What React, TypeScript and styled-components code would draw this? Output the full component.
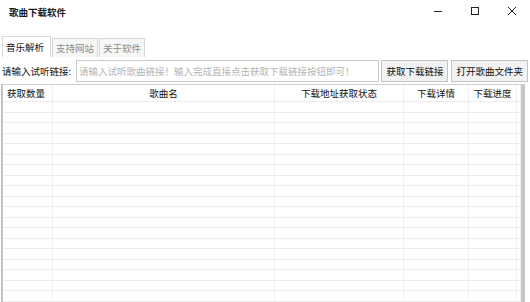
import * as React from 'react';
import styled, { createGlobalStyle } from 'styled-components';

const GlobalStyle = createGlobalStyle`
  html, body {
    margin: 0;
    padding: 0;
    background: #ffffff;
  }
  body {
    font-family: "Noto Sans CJK SC", "Noto Sans", sans-serif;
    color: #1a1a1a;
  }
`;

const columns = [
  { title: '获取数量', width: 50 },
  { title: '歌曲名', width: 222 },
  { title: '下载地址获取状态', width: 129 },
  { title: '下载详情', width: 65 },
  { title: '下载进度', width: 48 },
];

const tabs = ['音乐解析', '支持网站', '关于软件'];
const rowCount = 19;

const App: React.FC = () => (
  <>
    <GlobalStyle />
    <Window>
      <TitleBar>
        <Title>歌曲下载软件</Title>
        <Controls>
          <ControlButton aria-label="minimize">
            <svg width="10" height="10" viewBox="0 0 10 10">
              <line x1="1" y1="5.5" x2="9" y2="5.5" stroke="#222" strokeWidth="1" />
            </svg>
          </ControlButton>
          <ControlButton aria-label="maximize">
            <svg width="10" height="10" viewBox="0 0 10 10">
              <rect x="1.5" y="1.5" width="7" height="7" fill="none" stroke="#222" strokeWidth="1" />
            </svg>
          </ControlButton>
          <ControlButton aria-label="close">
            <svg width="10" height="10" viewBox="0 0 10 10">
              <path d="M1 1 L9 9 M9 1 L1 9" stroke="#222" strokeWidth="1" />
            </svg>
          </ControlButton>
        </Controls>
      </TitleBar>

      <TabStrip>
        {tabs.map((t, i) => (
          <Tab key={t} $active={i === 0}>
            {t}
          </Tab>
        ))}
      </TabStrip>

      <InputRow>
        <Label>请输入试听链接:</Label>
        <UrlInput placeholder="请输入试听歌曲链接！输入完成直接点击获取下载链接按钮即可！" />
        <ActionButton>获取下载链接</ActionButton>
        <ActionButton>打开歌曲文件夹</ActionButton>
      </InputRow>

      <Table>
        <HeaderRow>
          {columns.map((c) => (
            <HeaderCell key={c.title}>{c.title}</HeaderCell>
          ))}
          <HeaderCell />
        </HeaderRow>
        {Array.from({ length: rowCount }).map((_, r) => (
          <Row key={r}>
            {columns.map((c) => (
              <Cell key={c.title} />
            ))}
            <Cell />
          </Row>
        ))}
      </Table>
    </Window>
  </>
);

const Window = styled.div`
  width: 530px;
  height: 302px;
  overflow: hidden;
  display: flex;
  flex-direction: column;
  background: #ffffff;
`;

const TitleBar = styled.div`
  height: 36px;
  flex-shrink: 0;
  display: flex;
  justify-content: space-between;
  align-items: flex-start;
`;

const Title = styled.div`
  padding: 6px 0 0 9px;
  font-size: 9.5px;
  font-weight: 700;
  line-height: 12px;
`;

const Controls = styled.div`
  display: flex;
`;

const ControlButton = styled.div`
  width: 37px;
  height: 21px;
  display: flex;
  align-items: center;
  justify-content: center;
`;

const TabStrip = styled.div`
  height: 21px;
  flex-shrink: 0;
  display: flex;
  align-items: flex-end;
  padding-left: 2px;
  gap: 1px;
`;

const Tab = styled.div<{ $active: boolean }>`
  height: ${(p) => (p.$active ? 21 : 19)}px;
  box-sizing: border-box;
  padding: 0 ${(p) => (p.$active ? 6 : 3)}px 0 3px;
  display: flex;
  align-items: center;
  font-size: 9.5px;
  color: ${(p) => (p.$active ? '#111' : '#8a8a8a')};
  background: ${(p) => (p.$active ? '#ffffff' : '#f7f7f7')};
  border: 1px solid #d6d6d6;
  border-bottom: none;
`;

const InputRow = styled.div`
  margin-top: 3px;
  height: 22px;
  flex-shrink: 0;
  display: flex;
  align-items: stretch;
  padding: 0 2px;
  gap: 2px;
`;

const Label = styled.div`
  display: flex;
  align-items: center;
  font-size: 9.5px;
  color: #111;
  width: 72px;
  white-space: nowrap;
`;

const UrlInput = styled.input`
  width: 304px;
  box-sizing: border-box;
  border: 1px solid #c9c9c9;
  padding: 0 2px;
  font-family: "Noto Sans CJK SC", sans-serif;
  font-size: 9.5px;
  outline: none;
  &::placeholder {
    color: #b4b4b4;
  }
`;

const ActionButton = styled.div`
  display: flex;
  align-items: center;
  justify-content: center;
  padding: 0 4px;
  box-sizing: border-box;
  border: 1px solid #c4c4c4;
  background: #f2f2f2;
  font-size: 9.5px;
  color: #111;
  white-space: nowrap;
  & + & {
    margin-left: 1px;
  }
`;

const Table = styled.div`
  margin: 2px 0 0 1px;
  width: 524px;
  flex: 1;
  box-sizing: border-box;
  border-left: 2px solid #c2c2c2;
  border-right: 4px solid #c6c6c6;
  border-top: 1px solid #cfcfcf;
  overflow: hidden;
`;

const gridColumns = `${columns.map((c) => `${c.width}px`).join(' ')} 1fr`;

const HeaderRow = styled.div`
  display: grid;
  grid-template-columns: ${gridColumns};
  height: 16px;
  border-bottom: 1px solid #ececec;
`;

const HeaderCell = styled.div`
  display: flex;
  align-items: center;
  justify-content: center;
  font-size: 9.5px;
  color: #111;
  border-right: 1px solid #efefef;
  white-space: nowrap;
  &:first-child {
    justify-content: flex-start;
    padding-left: 4px;
  }
`;

const Row = styled.div`
  display: grid;
  grid-template-columns: ${gridColumns};
  height: 10.5px;
  box-sizing: border-box;
  border-bottom: 1px solid #ededed;
`;

const Cell = styled.div`
  border-right: 1px solid #f0f0f0;
`;

export default App;
